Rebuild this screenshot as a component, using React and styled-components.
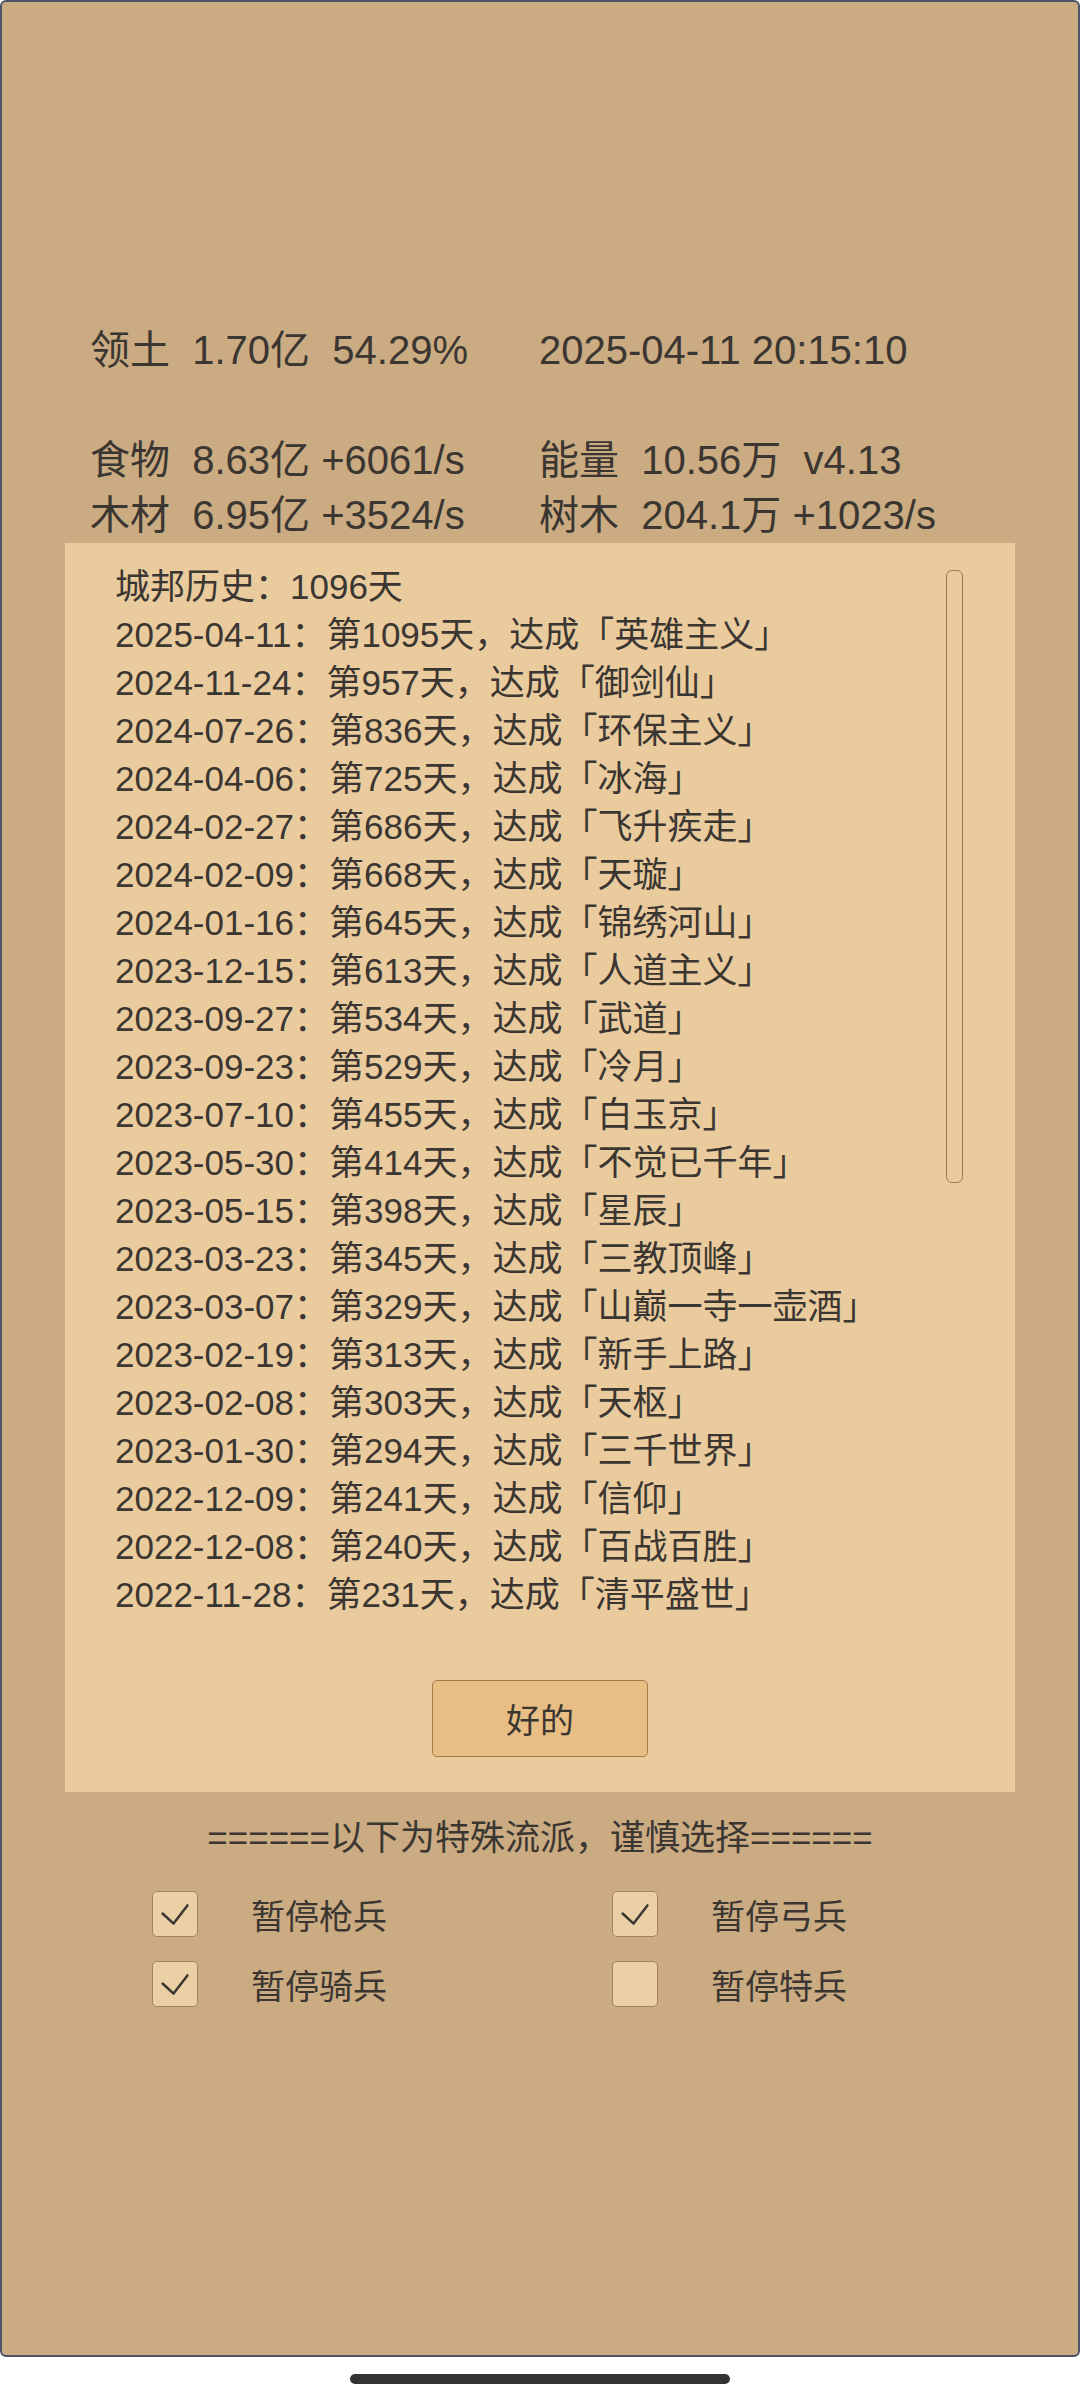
import React from "react";
import styled, { createGlobalStyle } from "styled-components";

const FONT = `"Liberation Sans", "Noto Sans CJK SC", sans-serif`;

const GlobalStyle = createGlobalStyle`
  html, body { margin: 0; padding: 0; background: #ffffff; }
  body { font-family: ${FONT}; color: #3b3631; }
  * { box-sizing: border-box; }
`;

const Screen = styled.div`
  width: 1080px;
  height: 2400px;
  background: #ffffff;
  display: flex;
  flex-direction: column;
  align-items: center;
`;

const Frame = styled.main`
  width: 1080px;
  height: 2357px;
  background: #caab82;
  border: 2px solid #4f5268;
  border-radius: 6px;
  display: flex;
  flex-direction: column;
  padding-top: 321px;
`;

const Stats = styled.div`
  display: grid;
  grid-template-columns: 449px 449px;
  padding-left: 88px;
  font-size: 40px;
  line-height: 55px;
  white-space: pre;
`;

const Stat = styled.div`
  margin-top: ${(p) => (p.$spaced ? "55px" : "0")};
`;

const Panel = styled.section`
  margin: 0 63px;
  background: #e9cb9e;
  padding: 20px 50px 35px;
  display: flex;
  flex-direction: column;
  align-items: center;
`;

const History = styled.div`
  position: relative;
  align-self: stretch;
  height: 1056px;
  overflow: hidden;
`;

const Line = styled.div`
  font-size: 35px;
  line-height: 48px;
  white-space: nowrap;
`;

const ScrollThumb = styled.div`
  position: absolute;
  top: 7px;
  right: 2px;
  width: 17px;
  height: 613px;
  border: 1.5px solid #9b7a4f;
  border-radius: 6px;
`;

const OkButton = styled.button`
  margin-top: 61px;
  width: 216px;
  height: 77px;
  background: #e9be85;
  border: 1.5px solid #9f7a4c;
  border-radius: 5px;
  font-family: ${FONT};
  font-size: 34px;
  color: #3b3631;
  padding: 0;
`;

const Warning = styled.div`
  margin-top: 22px;
  text-align: center;
  font-size: 35px;
  line-height: 48px;
`;

const Options = styled.div`
  margin-top: 29px;
  padding-left: 150px;
  display: grid;
  grid-template-columns: 460px 460px;
  row-gap: 24px;
`;

const Option = styled.label`
  display: flex;
  align-items: center;
  gap: 53px;
  height: 46px;
  font-size: 34px;
`;

const Box = styled.span`
  width: 46px;
  height: 46px;
  flex: none;
  background: #ecd0a5;
  border: 1.5px solid #a3835c;
  border-radius: 5px;
  display: flex;
  align-items: center;
  justify-content: center;
`;

const HomeBar = styled.div`
  margin-top: 17px;
  width: 380px;
  height: 10px;
  border-radius: 5px;
  background: #333333;
`;

const history = [
  ["2025-04-11", "1095", "英雄主义"],
  ["2024-11-24", "957", "御剑仙"],
  ["2024-07-26", "836", "环保主义"],
  ["2024-04-06", "725", "冰海"],
  ["2024-02-27", "686", "飞升疾走"],
  ["2024-02-09", "668", "天璇"],
  ["2024-01-16", "645", "锦绣河山"],
  ["2023-12-15", "613", "人道主义"],
  ["2023-09-27", "534", "武道"],
  ["2023-09-23", "529", "冷月"],
  ["2023-07-10", "455", "白玉京"],
  ["2023-05-30", "414", "不觉已千年"],
  ["2023-05-15", "398", "星辰"],
  ["2023-03-23", "345", "三教顶峰"],
  ["2023-03-07", "329", "山巅一寺一壶酒"],
  ["2023-02-19", "313", "新手上路"],
  ["2023-02-08", "303", "天枢"],
  ["2023-01-30", "294", "三千世界"],
  ["2022-12-09", "241", "信仰"],
  ["2022-12-08", "240", "百战百胜"],
  ["2022-11-28", "231", "清平盛世"],
];

const options = [
  ["暂停枪兵", true],
  ["暂停弓兵", true],
  ["暂停骑兵", true],
  ["暂停特兵", false],
];

function Check() {
  return (
    <svg width="46" height="46" viewBox="0 0 46 46" fill="none">
      <path d="M10 22.5 L21.5 33 L36 14" stroke="#3b3631" strokeWidth="2.6" strokeLinecap="round" strokeLinejoin="round" />
    </svg>
  );
}

export default function App() {
  return (
    <Screen>
      <GlobalStyle />
      <Frame>
        <Stats>
          <Stat>{"领土  1.70亿  54.29%"}</Stat>
          <Stat>{"2025-04-11 20:15:10"}</Stat>
          <Stat $spaced>{"食物  8.63亿 +6061/s"}</Stat>
          <Stat $spaced>{"能量  10.56万  v4.13"}</Stat>
          <Stat>{"木材  6.95亿 +3524/s"}</Stat>
          <Stat>{"树木  204.1万 +1023/s"}</Stat>
        </Stats>
        <Panel>
          <History>
            <Line>城邦历史：1096天</Line>
            {history.map(([date, day, name]) => (
              <Line key={date + day}>{`${date}：第${day}天，达成「${name}」`}</Line>
            ))}
            <ScrollThumb />
          </History>
          <OkButton>好的</OkButton>
        </Panel>
        <Warning>======以下为特殊流派，谨慎选择======</Warning>
        <Options>
          {options.map(([label, checked]) => (
            <Option key={label}>
              <Box>{checked && <Check />}</Box>
              {label}
            </Option>
          ))}
        </Options>
      </Frame>
      <HomeBar />
    </Screen>
  );
}
